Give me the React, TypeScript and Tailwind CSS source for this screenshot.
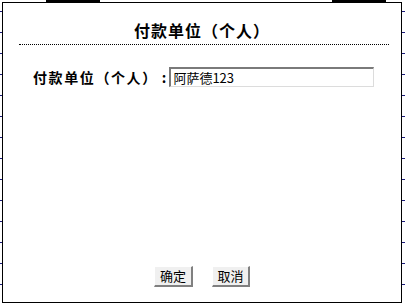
import React from "react";

export default function App() {
  const lines = Array.from({ length: 14 });
  return (
    <div className="relative w-[405px] h-[303px] overflow-hidden bg-white" style={{ fontFamily: '"Noto Sans CJK SC", "Noto Sans", sans-serif' }}>
      {/* background page lines */}
      <div className="flex flex-col">
        <div className="h-[11px] flex">
          <div className="ml-[46px] w-[54px] h-[2px] bg-black" />
          <div className="ml-[232px] w-[54px] h-[2px] bg-black" />
        </div>
        {lines.map((_, i) => (
          <div key={i} className="h-[21px] border-t border-[#1a1a7a]" />
        ))}
      </div>

      {/* dialog */}
      <div className="absolute left-[2px] top-[2px] w-[400px] h-[301px] border border-black bg-white flex flex-col">
        <div className="mt-[19px] text-center text-[16px] leading-[16px] font-bold tracking-[1px] text-black">
          付款单位（个人）
        </div>
        <div className="mt-[6px] ml-[16px] mr-[12px] border-t border-dotted border-black" />
        <div className="mt-[22px] ml-[30px] flex items-center">
          <span className="text-[14px] leading-[20px] font-bold tracking-[1.6px] text-black">付款单位（个人）</span>
          <span className="ml-[4px] text-[14px] leading-[20px] font-bold text-black">:</span>
          <div className="ml-[3px] w-[205px] h-[20px] border-t-2 border-l-2 border-r border-b border-t-[#7a7a7a] border-l-[#7a7a7a] border-r-[#dcdcdc] border-b-[#dcdcdc] flex items-center pl-[2px] text-[13px] leading-[16px] text-black">
            阿萨德123
          </div>
        </div>
        <div className="mt-auto pb-[15px] flex justify-center gap-[19px]">
          <div className="w-[39px] h-[21px] bg-[#f0f0f0] border-t border-l border-r-2 border-b-2 border-t-white border-l-white border-r-[#808080] border-b-[#808080] flex items-center justify-center text-[13px] leading-[16px] text-black">
            确定
          </div>
          <div className="w-[38px] h-[21px] bg-[#f0f0f0] border-t border-l border-r-2 border-b-2 border-t-white border-l-white border-r-[#808080] border-b-[#808080] flex items-center justify-center text-[13px] leading-[16px] text-black">
            取消
          </div>
        </div>
      </div>
    </div>
  );
}
